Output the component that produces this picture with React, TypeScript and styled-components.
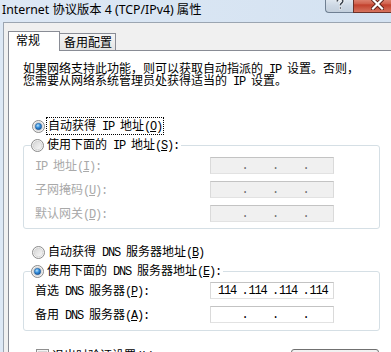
import React from 'react';
import styled, { createGlobalStyle } from 'styled-components';

const Global = createGlobalStyle`
  html, body { margin: 0; padding: 0; }
  body {
    width: 391px;
    height: 352px;
    overflow: hidden;
    background: #dbe6f3;
    font-family: "Noto Sans CJK SC", "Noto Sans", sans-serif;
    font-size: 12px;
    color: #000;
  }
  fieldset, legend { margin: 0; }
`;

const Window = styled.div`
  width: 391px;
  height: 352px;
  display: flex;
  flex-direction: column;
  overflow: hidden;
  background: linear-gradient(to right, #dde8f5, #d4e2f1);
`;

const TitleBar = styled.div`
  height: 22px;
  flex-shrink: 0;
  display: flex;
  align-items: flex-start;
`;

const Title = styled.div`
  padding: 2px 0 0 2px;
  font-family: "Noto Sans", "Noto Sans CJK SC", sans-serif;
  font-size: 12.3px;
  line-height: 16px;
  white-space: nowrap;
`;

const Caption = styled.div`
  margin-left: auto;
  margin-top: -5px;
  margin-right: -10px;
  display: flex;
  height: 18px;
`;

const HelpBtn = styled.div`
  width: 28px;
  height: 18px;
  box-sizing: border-box;
  border: 1px solid #6f7f92;
  border-right: none;
  border-radius: 0 0 0 4px;
  background: linear-gradient(#e9eff6, #cdd8e4 60%, #c3cfdc);
  display: flex;
  align-items: center;
  justify-content: center;
`;

const CloseBtn = styled.div`
  width: 48px;
  height: 18px;
  box-sizing: border-box;
  border: 1px solid #6b3129;
  background: linear-gradient(#e8a08f, #d0604c 50%, #c2402c 55%, #d6735e);
  display: flex;
  align-items: center;
  justify-content: center;
`;

const Client = styled.div`
  flex: 1;
  min-height: 0;
  margin-left: 3px;
  background: #f0f0f0;
  border-left: 1px solid #9ba5b1;
  border-top: 1px solid #9ba5b1;
  padding: 8px 0 0 4px;
  display: flex;
  flex-direction: column;
`;

const TabStrip = styled.div`
  height: 19px;
  flex-shrink: 0;
  display: flex;
  align-items: flex-end;
`;

const Tab = styled.div<{ $active?: boolean }>`
  position: relative;
  box-sizing: border-box;
  border: 1px solid #898c95;
  border-bottom: none;
  white-space: nowrap;
  line-height: 14px;
  ${(p) =>
    p.$active
      ? `
    z-index: 1;
    width: 52px;
    height: 20px;
    margin-bottom: -1px;
    padding: 1px 0 0 7px;
    background: #fff;
  `
      : `
    width: 57px;
    height: 17px;
    margin-left: -1px;
    padding: 1px 0 0 4px;
    background: linear-gradient(#f6f6f6, #e4e4e4);
  `}
`;

const Panel = styled.div`
  flex: 1;
  background: #fff;
  border-left: 1px solid #898c95;
  border-top: 1px solid #898c95;
  padding: 11px 0 0 14px;
  display: flex;
  flex-direction: column;
  align-items: flex-start;
`;

const DescLine = styled.div`
  height: 12px;
  line-height: 12px;
  white-space: nowrap;
`;

const Half = styled.span`
  font-family: "Liberation Mono", monospace;
  font-size: 12px;
  letter-spacing: -1.2px;
`;

const RadioRow = styled.div<{ $mt?: number }>`
  height: 16px;
  display: flex;
  align-items: center;
  margin-top: ${(p) => p.$mt ?? 0}px;
  padding-left: 9px;
  white-space: nowrap;
  line-height: 14px;
`;

const RadioLabel = styled.span<{ $focus?: boolean }>`
  margin-left: 2px;
  padding: 0 1px;
  line-height: 13px;
  outline: ${(p) => (p.$focus ? '1px dotted #000' : 'none')};
`;

const RadioSvg = styled.svg`
  flex-shrink: 0;
  display: block;
`;

const Group = styled.fieldset<{ $mt: number }>`
  box-sizing: border-box;
  width: 357px;
  margin-top: ${(p) => p.$mt}px;
  padding: 0;
  border: 1px solid #d5dfe5;
  border-radius: 3px;
  min-width: 0;
`;

const Legend = styled.legend`
  padding: 0 1px 0 0;
  margin-left: 7px;
`;

const LegendRow = styled.div`
  height: 16px;
  display: flex;
  align-items: center;
  white-space: nowrap;
  line-height: 14px;
`;

const FieldGrid = styled.div<{ $pt: number; $pb: number }>`
  display: grid;
  grid-template-columns: 175px 124px;
  row-gap: 7px;
  padding: ${(p) => p.$pt}px 0 ${(p) => p.$pb}px 11px;
`;

const FieldLabel = styled.div<{ $disabled?: boolean }>`
  height: 17px;
  display: flex;
  align-items: center;
  white-space: nowrap;
  line-height: 14px;
  color: ${(p) => (p.$disabled ? '#a9a9a9' : '#000')};
`;

const IpBox = styled.div<{ $disabled?: boolean }>`
  box-sizing: border-box;
  height: 17px;
  width: 124px;
  border: 1px solid;
  border-color: #c3c3c3 #dadada #e2e2e2 #dadada;
  background: ${(p) => (p.$disabled ? '#f0f0f0' : '#fff')};
  display: flex;
  color: ${(p) => (p.$disabled ? '#6d6d6d' : '#000')};
`;

const Octet = styled.div`
  width: 31px;
  display: flex;
  align-items: center;
  line-height: 14px;
`;

const Dot = styled.span`
  width: 7px;
  text-align: center;
  font-family: "Liberation Mono", monospace;
  font-size: 12px;
`;

const Digits = styled.span`
  font-family: "Liberation Mono", monospace;
  font-size: 12px;
  letter-spacing: -1.2px;
`;

const BottomRow = styled.div`
  width: 356px;
  margin-top: 17px;
  display: flex;
  align-items: flex-start;
`;

const CheckBox = styled.div`
  box-sizing: border-box;
  width: 13px;
  height: 13px;
  margin: 1px 0 0 13px;
  border: 1px solid #8f8f8f;
  background: linear-gradient(135deg, #dcdcdc, #fbfbfb);
  box-shadow: inset 0 0 0 1px #f4f4f4, inset 0 0 0 2px #d6d6d6;
`;

const CheckLabel = styled.span`
  margin-left: 3px;
  line-height: 14px;
  white-space: nowrap;
`;

const Button = styled.div`
  margin-left: auto;
  box-sizing: border-box;
  width: 88px;
  height: 23px;
  margin-top: 1px;
  border: 1px solid #707070;
  border-radius: 3px;
  background: linear-gradient(#f2f2f2, #ebebeb 50%, #dddddd 50%, #cfcfcf);
`;

function accel(s: string, key: number) {
  const parts = s.split(/&(.)/);
  return parts.map((p, i) => (i % 2 === 1 ? <u key={`${key}-${i}`}>{p}</u> : p));
}

function T({ s }: { s: string }) {
  const parts = s.split(/([\x20-\x7e]+)/).filter((p) => p.length > 0);
  return (
    <span>
      {parts.map((p, i) =>
        /^[\x20-\x7e]+$/.test(p) ? <Half key={i}>{accel(p, i)}</Half> : <React.Fragment key={i}>{p}</React.Fragment>
      )}
    </span>
  );
}

function Radio({ checked }: { checked?: boolean }) {
  return (
    <RadioSvg width="13" height="13" viewBox="0 0 13 13">
      <defs>
        <linearGradient id="rOuter" x1="0" y1="0" x2="1" y2="1">
          <stop offset="0" stopColor="#d4d4d4" />
          <stop offset="1" stopColor="#fafafa" />
        </linearGradient>
        <radialGradient id="rDot" cx="0.4" cy="0.35" r="0.7">
          <stop offset="0" stopColor="#b9e3fb" />
          <stop offset="0.45" stopColor="#3a93df" />
          <stop offset="1" stopColor="#0c4c96" />
        </radialGradient>
      </defs>
      <circle cx="6.5" cy="6.5" r="6" fill="#f4f4f4" stroke="#8a8a8a" strokeWidth="1" />
      <circle cx="6.5" cy="6.5" r="4.3" fill="url(#rOuter)" stroke="#d0d0d0" strokeWidth="0.8" />
      {checked && <circle cx="6.5" cy="6.5" r="3.2" fill="url(#rDot)" stroke="#1d5590" strokeWidth="0.5" />}
    </RadioSvg>
  );
}

function Ip({ values, disabled }: { values?: string[]; disabled?: boolean }) {
  return (
    <IpBox $disabled={disabled}>
      {[0, 1, 2, 3].map((i) => (
        <Octet key={i}>
          <Dot>{i > 0 ? '.' : ''}</Dot>
          <Digits>{values ? values[i] : ''}</Digits>
        </Octet>
      ))}
    </IpBox>
  );
}

export default function App() {
  return (
    <>
      <Global />
      <Window>
        <TitleBar>
          <Title>Internet 协议版本 4 (TCP/IPv4) 属性</Title>
          <Caption>
            <HelpBtn>
              <svg width="10" height="12" viewBox="0 0 10 12">
                <path
                  d="M2.2 3.6 C2.2 1.6 3.6 0.9 5 0.9 C6.6 0.9 7.8 1.8 7.8 3.3 C7.8 5 5.3 5.3 5.3 7.3"
                  fill="none"
                  stroke="#fff"
                  strokeWidth="3"
                />
                <path
                  d="M2.2 3.6 C2.2 1.6 3.6 0.9 5 0.9 C6.6 0.9 7.8 1.8 7.8 3.3 C7.8 5 5.3 5.3 5.3 7.3"
                  fill="none"
                  stroke="#3b4450"
                  strokeWidth="1.5"
                />
                <rect x="4.3" y="9" width="2" height="2" fill="#3b4450" stroke="#fff" strokeWidth="0.6" />
              </svg>
            </HelpBtn>
            <CloseBtn>
              <svg width="13" height="12" viewBox="0 0 13 12">
                <path d="M2 1.5 L11 10.5 M11 1.5 L2 10.5" stroke="#5a1e16" strokeWidth="4" strokeLinecap="square" />
                <path d="M2 1.5 L11 10.5 M11 1.5 L2 10.5" stroke="#fff" strokeWidth="2.2" strokeLinecap="square" />
              </svg>
            </CloseBtn>
          </Caption>
        </TitleBar>
        <Client>
          <TabStrip>
            <Tab $active>常规</Tab>
            <Tab>备用配置</Tab>
          </TabStrip>
          <Panel>
            <DescLine>
              <T s="如果网络支持此功能，则可以获取自动指派的 IP 设置。否则，" />
            </DescLine>
            <DescLine>
              <T s="您需要从网络系统管理员处获得适当的 IP 设置。" />
            </DescLine>
            <RadioRow $mt={32}>
              <Radio checked />
              <RadioLabel $focus>
                <T s="自动获得 IP 地址(&O)" />
              </RadioLabel>
            </RadioRow>
            <Group $mt={3}>
              <Legend>
                <LegendRow>
                  <Radio />
                  <RadioLabel>
                    <T s="使用下面的 IP 地址(&S):" />
                  </RadioLabel>
                </LegendRow>
              </Legend>
              <FieldGrid $pt={4} $pb={6}>
                <FieldLabel $disabled>
                  <T s="IP 地址(&I):" />
                </FieldLabel>
                <Ip disabled />
                <FieldLabel $disabled>
                  <T s="子网掩码(&U):" />
                </FieldLabel>
                <Ip disabled />
                <FieldLabel $disabled>
                  <T s="默认网关(&D):" />
                </FieldLabel>
                <Ip disabled />
              </FieldGrid>
            </Group>
            <RadioRow $mt={15}>
              <Radio />
              <RadioLabel>
                <T s="自动获得 DNS 服务器地址(&B)" />
              </RadioLabel>
            </RadioRow>
            <Group $mt={3}>
              <Legend>
                <LegendRow>
                  <Radio checked />
                  <RadioLabel>
                    <T s="使用下面的 DNS 服务器地址(&E):" />
                  </RadioLabel>
                </LegendRow>
              </Legend>
              <FieldGrid $pt={3} $pb={7}>
                <FieldLabel>
                  <T s="首选 DNS 服务器(&P):" />
                </FieldLabel>
                <Ip values={['114', '114', '114', '114']} />
                <FieldLabel>
                  <T s="备用 DNS 服务器(&A):" />
                </FieldLabel>
                <Ip />
              </FieldGrid>
            </Group>
            <BottomRow>
              <CheckBox />
              <CheckLabel>
                <T s="退出时验证设置(&L)" />
              </CheckLabel>
              <Button />
            </BottomRow>
          </Panel>
        </Client>
      </Window>
    </>
  );
}
